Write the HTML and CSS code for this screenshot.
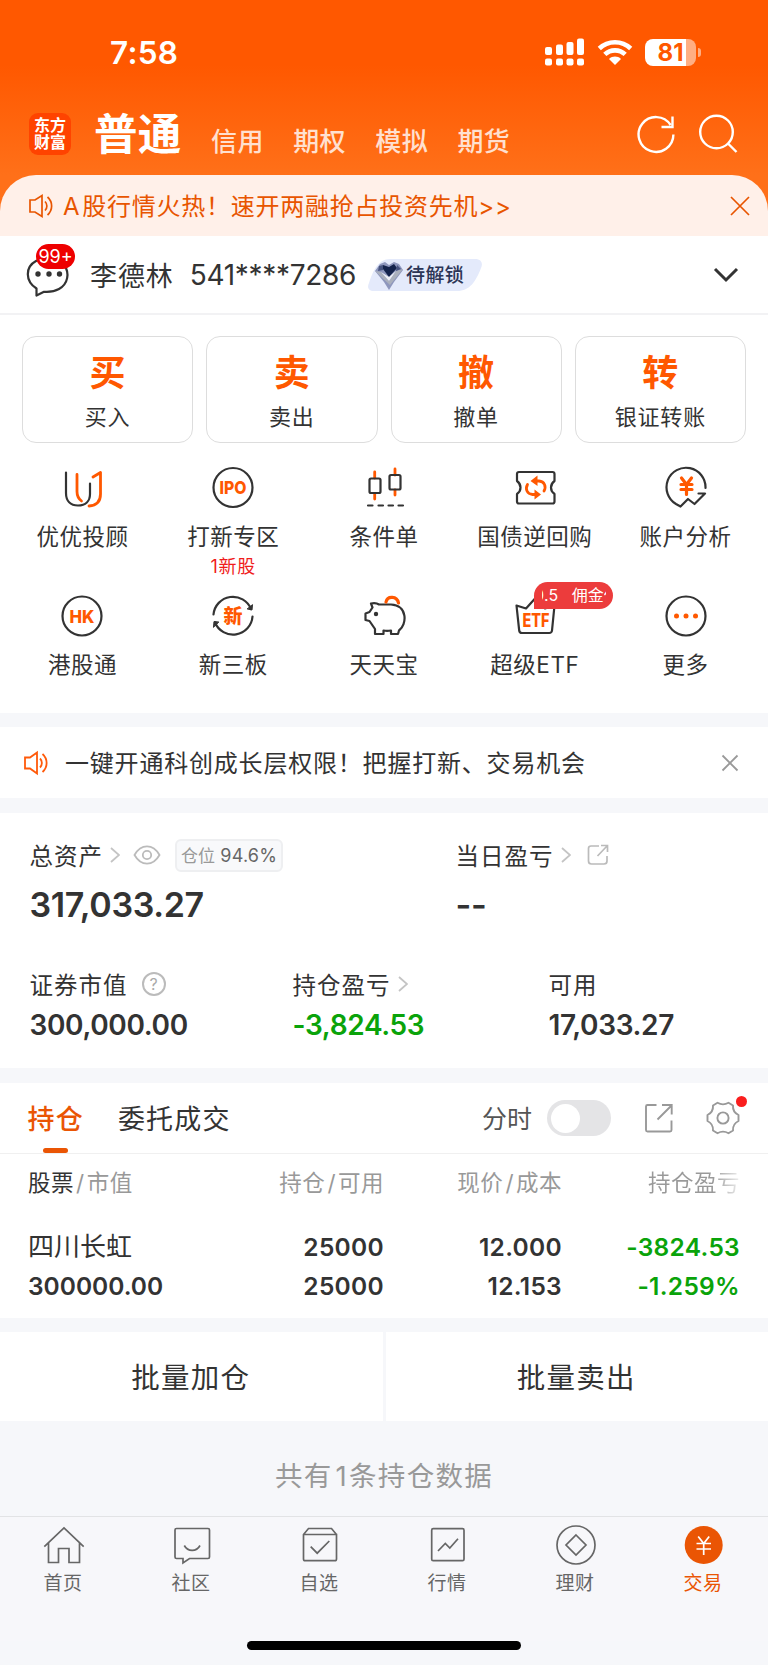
FILE: index.html
```html
<!DOCTYPE html>
<html lang="zh-CN">

<head>
    <meta charset="UTF-8">
    <meta name="viewport" content="width=device-width, initial-scale=1.0">
    <title>东方财富 - 交易</title>
    <link rel="stylesheet" href="styles.css">
</head>

<body>
    <!-- Header -->
    <header class="top">
        <div class="status">
            <span class="status__time">7:58</span>
            <div class="status__icons">
                <svg class="signal" width="40" height="28" viewBox="0 0 40 28" fill="#fff">
                    <rect x="0" y="9" width="7" height="8" rx="2" />
                    <rect x="11" y="6.500" width="7" height="10.500" rx="2" />
                    <rect x="21.500" y="4" width="7" height="13" rx="2" />
                    <rect x="32" y="0.500" width="7" height="16.500" rx="2" />
                    <rect x="0" y="20.500" width="7" height="7" rx="2" />
                    <rect x="11" y="20.500" width="7" height="7" rx="2" />
                    <rect x="21.500" y="20.500" width="7" height="7" rx="2" />
                    <rect x="32" y="20.500" width="7" height="7" rx="2" />
                </svg>
                <svg class="wifi" width="36" height="26" viewBox="0 0 36 26" fill="none" stroke="#fff" stroke-width="4.600">
                    <path d="M2.300 9.500C11 1.200 25 1.200 33.700 9.500" />
                    <path d="M7.800 15.400C13.500 10 22.500 10 28.200 15.400" />
                    <path d="M12 20c3.500-3.200 8.500-3.200 12 0l-6 6z" fill="#fff" stroke="none" />
                </svg>
                <div class="battery"><span>81</span></div>
            </div>
        </div>
        <nav class="accounts">
            <div class="logo"><span>东方</span><span>财富</span></div>
            <a class="accounts__item accounts__item--active">普通</a>
            <a class="accounts__item">信用</a>
            <a class="accounts__item">期权</a>
            <a class="accounts__item">模拟</a>
            <a class="accounts__item">期货</a>
            <div class="accounts__tools">
                <svg width="40" height="40" viewBox="0 0 40 40" fill="none" stroke="#fff" stroke-width="2.400">
                    <path d="M37.400 20.500A17.400 17.400 0 1 1 34.600 11M36.500 2.500V13H25.500" />
                </svg>
                <svg width="40" height="40" viewBox="0 0 40 40" fill="none" stroke="#fff" stroke-width="2.400">
                    <circle cx="18.500" cy="18" r="16.300" />
                    <path d="M30 29.500l8.500 8.500" />
                </svg>
            </div>
        </nav>
    </header>

    <div class="promo">
        <svg width="26" height="26" viewBox="0 0 26 26" fill="none" stroke="#e85500" stroke-width="1.700">
            <path d="M2 7h5l7-4.500v21L7 19H2zM17 8.500c2.500 2.500 2.500 6.500 0 9M19.500 4c5.500 5 5.500 13 0 18" />
        </svg>
        <span class="promo__text"><span>A</span>股行情火热！速开两融抢占投资先机&gt;&gt;</span>
        <svg class="promo__close" width="20" height="20" viewBox="0 0 20 20" stroke="#e85500" stroke-width="1.700">
            <path d="M1 1l18 18M19 1L1 19" />
        </svg>
    </div>

    <!-- User -->
    <div class="user">
        <div class="user__msg">
            <svg width="46" height="44" viewBox="0 0 46 44">
                <path d="M10.500 39.500v-7C-1 25-1 11 10 5c9-5 21-4 28 4 6 8 4 19-5 24-5 2.800-10 3.200-15 2.800z" fill="none" stroke="#333" stroke-width="2.200" stroke-linejoin="round" />
                <g fill="#333">
                    <circle cx="12" cy="18" r="2.700" />
                    <circle cx="23" cy="18" r="2.700" />
                    <circle cx="33.500" cy="18" r="2.700" />
                </g>
            </svg>
            <span class="user__count">99+</span>
        </div>
        <span class="user__name">李德林</span>
        <span class="user__no">541****7286</span>
        <div class="level">
            <svg class="level__bg" width="116" height="32" viewBox="0 0 116 32">
                <path d="M22 0h85c7 0 8 5 6 9-5 13-11 23-24 23H6c-6 0-7-4-5-8C5 12 10 0 22 0z" fill="#e4eafb" />
            </svg>
            <svg class="level__gem" width="30" height="30" viewBox="0 0 30 30">
                <path d="M6 2l5-2 4 3 5-3 5 2 4 6-9 12-5 8-5-8L1 9z" fill="#8e97bd" />
                <path d="M9 3l6 2 5-3 3 4-8 9-6-8z" fill="#14234c" />
                <path d="M1 9l6 1 8 9 7-10 7-2-13 16z" fill="#aab0bd" />
                <path d="M7 10l8 9 7-10-7 6z" fill="#eef0f6" />
                <path d="M5 4l4-1v5L4 9zM23 3l4 4-5 2z" fill="#46537f" />
            </svg>
            <span>待解锁</span>
        </div>
        <svg class="user__more" width="26" height="16" viewBox="0 0 26 16" fill="none" stroke="#333" stroke-width="3">
            <path d="M2 2l11 11L24 2" />
        </svg>
    </div>

    <!-- Trade buttons -->
    <div class="trade">
        <a class="trade__btn"><b>买</b><span>买入</span></a>
        <a class="trade__btn"><b>卖</b><span>卖出</span></a>
        <a class="trade__btn"><b>撤</b><span>撤单</span></a>
        <a class="trade__btn"><b>转</b><span>银证转账</span></a>
    </div>

    <!-- Feature menu -->
    <div class="menu">
        <a class="menu__item">
            <svg class="icon" viewBox="0 0 44 44">
                <path d="M6 6.500V27c0 8 4.500 12.500 12 12.500S30 35 30 28V17.500" />
                <path class="o" d="M17 8.500v17c0 4 1.800 7.500 4.500 9.500M33 11l7.500-4.500V28c0 7-4 11.500-11.500 12" />
            </svg>
            <span>优优投顾</span>
        </a>
        <a class="menu__item">
            <svg class="icon" viewBox="0 0 44 44">
                <circle cx="22" cy="21.500" r="19.500" />
                <text x="22" y="28" font-size="18" textLength="27" lengthAdjust="spacingAndGlyphs">IPO</text>
            </svg>
            <span>打新专区</span>
            <small>1新股</small>
        </a>
        <a class="menu__item">
            <svg class="icon" viewBox="0 0 44 44">
                <path class="o" d="M12.700 6v6M12.700 28v5M33 3v6M33 24v5" />
                <rect x="7.500" y="12.500" width="11" height="14.500" rx="1.500" />
                <rect x="27.500" y="9" width="11" height="14.500" rx="1.500" />
                <path d="M6 39.500h4.500M16.500 39.500h4.500M26.500 39.500h4.500M36.500 39.500h4.500" />
            </svg>
            <span>条件单</span>
        </a>
        <a class="menu__item">
            <svg class="icon" viewBox="0 0 44 44">
                <path d="M6 6h33.500q2 0 2 2v7q-3.500 2.500-3.500 6.500t3.500 6.500v7.500q0 2-2 2H6q-2 0-2-2V28q3.500-2.500 3.500-6.500T4 15V8q0-2 2-2z" />
                <path class="o" d="M14.500 18.500c-2.500 4.500-.5 9.500 5 10h4M31 25c2.500-4.500.5-9.500-5-10h-4" />
                <path class="f" d="M17.500 15l7-5.500v10.500zM28 28.500l-6.500-5v10z" />
            </svg>
            <span>国债逆回购</span>
        </a>
        <a class="menu__item">
            <svg class="icon" viewBox="0 0 44 44">
                <path d="M41.500 22A19.500 19.500 0 1 0 12 38l4.500 2.500L24 33l6.500 5L41 27.500h-6.500" />
                <path class="o y" d="M17.500 12l5 6.500 5-6.500M22.500 18.500v10M17 18.500h11M17 23.500h11" />
            </svg>
            <span>账户分析</span>
        </a>
        <a class="menu__item">
            <svg class="icon" viewBox="0 0 44 44">
                <circle cx="22" cy="22" r="19.500" />
                <text x="22" y="28.500" font-size="18" textLength="25" lengthAdjust="spacingAndGlyphs">HK</text>
            </svg>
            <span>港股通</span>
        </a>
        <a class="menu__item">
            <svg class="icon" viewBox="0 0 44 44">
                <path d="M2.500 20.500A19.500 19.500 0 0 1 40 15M41.500 22.500A19.500 19.500 0 0 1 4 28.500" />
                <path d="M36.500 15l4.500 1 .5-5zM7.500 28L3 27.500 2.500 33z" fill="#333" stroke-width="1" />
                <text x="22" y="28.800" font-size="19">新</text>
            </svg>
            <span>新三板</span>
        </a>
        <a class="menu__item">
            <svg class="icon" viewBox="0 0 44 44">
                <path d="M9 9.500q5-1 8 1h12c17 1 16 20 8 26l-1 3.500h-7v-3.500q-4 .8-7.500 0V40H13v-5l-5.500-8L3.500 26v-6.500L7.500 18l3-4.500z" />
                <path class="o y" d="M24 8c1.500-6.500 11-6 12.500 1" />
                <circle cx="14" cy="20" r="2.200" fill="#333" stroke="none" />
            </svg>
            <span>天天宝</span>
        </a>
        <a class="menu__item">
            <svg class="icon" viewBox="0 0 44 44">
                <path d="M3.500 11.500l9.500 3L22.500 4 32 14.500l9.500-3-2.500 25q-.3 2.500-2.800 2.500H9q-2.500 0-2.800-2.500z" />
                <text x="23" y="32.500" font-size="18.500" textLength="27" lengthAdjust="spacingAndGlyphs">ETF</text>
            </svg>
            <span>超级ETF</span>
            <em class="menu__tag"><i>0</i>.5&nbsp;&nbsp; 佣金<i class="r">仅</i></em>
        </a>
        <a class="menu__item">
            <svg class="icon" viewBox="0 0 44 44">
                <circle cx="22" cy="22" r="19.500" />
                <g class="f">
                    <circle cx="12.500" cy="22" r="2.500" />
                    <circle cx="22" cy="22" r="2.500" />
                    <circle cx="31.500" cy="22" r="2.500" />
                </g>
            </svg>
            <span>更多</span>
        </a>
    </div>

    <!-- Notice -->
    <div class="notice">
        <svg width="26" height="26" viewBox="0 0 26 26" fill="none" stroke="#ff5a0a" stroke-width="1.800">
            <path d="M2 7.500h5l7-5v21l-7-5H2zM17 8.500c2.500 2.500 2.500 6.500 0 9M19.500 4c5.500 5 5.500 13 0 18" />
        </svg>
        <span class="notice__text">一键开通科创成长层权限！把握打新、交易机会</span>
        <svg width="18" height="18" viewBox="0 0 18 18" stroke="#999" stroke-width="1.800">
            <path d="M1.500 1.500l15 15M16.500 1.500l-15 15" />
        </svg>
    </div>

    <!-- Assets -->
    <section class="assets">
        <div class="assets__row assets__row--total">
            <div class="asset">
                <div class="asset__label">
                    总资产
                    <svg class="arrow" viewBox="0 0 10 16"><path d="M1 1l8 7-8 7" /></svg>
                    <svg class="eye" width="28" height="20" viewBox="0 0 28 20" fill="none" stroke="#bbb" stroke-width="1.800">
                        <path d="M1.500 10C8-1.500 20-1.500 26.500 10 20 21.500 8 21.500 1.500 10z" />
                        <circle cx="14" cy="10" r="4.200" />
                    </svg>
                    <span class="position">仓位 <b>94.6%</b></span>
                </div>
                <div class="asset__value">317,033.27</div>
            </div>
            <div class="asset">
                <div class="asset__label">
                    当日盈亏
                    <svg class="arrow" viewBox="0 0 10 16"><path d="M1 1l8 7-8 7" /></svg>
                    <svg class="share" width="22" height="22" viewBox="0 0 22 22" fill="none" stroke="#bbb" stroke-width="1.700">
                        <path d="M12 2H4Q1.500 2 1.500 4.500V17q0 3 3 3H17q3 0 3-3V12M10.500 12L20 2M14 1.500h6.500V8" />
                    </svg>
                </div>
                <div class="asset__value">--</div>
            </div>
        </div>
        <div class="assets__row assets__row--detail">
            <div class="asset">
                <div class="asset__label">
                    证券市值
                    <span class="help">?</span>
                </div>
                <div class="asset__value">300,000.00</div>
            </div>
            <div class="asset">
                <div class="asset__label">
                    持仓盈亏
                    <svg class="arrow" viewBox="0 0 10 16"><path d="M1 1l8 7-8 7" /></svg>
                </div>
                <div class="asset__value down">-3,824.53</div>
            </div>
            <div class="asset">
                <div class="asset__label">可用</div>
                <div class="asset__value">17,033.27</div>
            </div>
        </div>
    </section>

    <!-- Holdings -->
    <section class="holdings">
        <div class="tabs">
            <a class="tabs__item tabs__item--active">持仓</a>
            <a class="tabs__item">委托成交</a>
            <div class="tabs__tools">
                <span>分时</span>
                <div class="switch"></div>
                <svg class="export" width="30" height="30" viewBox="0 0 30 30" fill="none" stroke="#999" stroke-width="1.900">
                    <path d="M12.500 2H3.500Q2 2 2 3.500V27q0 1.500 1.500 1.500H26q1.500 0 1.500-1.500V17.500M13.500 16.500L28 2M18 2h9.700v9.500" />
                </svg>
                <div class="gear">
                    <svg width="34" height="34" viewBox="0 0 34 34" fill="none" stroke="#999" stroke-width="1.900" stroke-linejoin="round">
                        <path d="M11.500 1.800Q17 5 22.500 1.800L27 4.500Q26.500 11 32.500 14v6Q26.500 23 27 29.500l-4.500 2.700Q17 29 11.500 32.200L7 29.500Q7.500 23 1.500 20v-6Q7.500 11 7 4.500z" />
                        <circle cx="17" cy="17" r="5.600" />
                    </svg>
                </div>
            </div>
        </div>
        <table>
            <thead>
                <tr>
                    <th><b>股票</b><i>/</i>市值</th>
                    <th>持仓<i>/</i>可用</th>
                    <th>现价<i>/</i>成本</th>
                    <th><span class="fade">持仓盈亏</span></th>
                </tr>
            </thead>
            <tbody>
                <tr>
                    <td class="stock">四川长虹</td>
                    <td>25000</td>
                    <td>12.000</td>
                    <td class="down">-3824.53</td>
                </tr>
                <tr>
                    <td>300000.00</td>
                    <td>25000</td>
                    <td>12.153</td>
                    <td class="down">-1.259%</td>
                </tr>
            </tbody>
        </table>
    </section>

    <div class="batch">
        <a>批量加仓</a>
        <a>批量卖出</a>
    </div>

    <p class="summary">共有<span>1</span>条持仓数据</p>

    <!-- Bottom bar -->
    <footer class="bar">
        <a class="bar__item">
            <svg class="bar__icon" viewBox="0 0 44 44">
                <path d="M2.300 23.700L22 5l19.700 18.700M6.500 20v19.500h10v-14h10.500v14h10.500V20" />
            </svg>
            <span>首页</span>
        </a>
        <a class="bar__item">
            <svg class="bar__icon" viewBox="0 0 44 44">
                <path d="M6.500 5.500h31.500q1.500 0 1.500 1.500v27q0 1.500-1.500 1.500H19.500L13 40v-4.500H6.500Q5 35.500 5 34V7q0-1.500 1.500-1.500zM14.300 22.500c3.500 6.500 12.200 6.500 15.700 0" />
            </svg>
            <span>社区</span>
        </a>
        <a class="bar__item">
            <svg class="bar__icon" viewBox="0 0 44 44">
                <path d="M5.500 11.500h33V36q0 1.700-1.700 1.700H7.200Q5.500 37.700 5.500 36V11.500l5-6h23l5 6M12.700 23.700l6.500 6.500L31.300 18" />
            </svg>
            <span>自选</span>
        </a>
        <a class="bar__item">
            <svg class="bar__icon" viewBox="0 0 44 44">
                <rect x="5.700" y="5.700" width="32.300" height="32" rx="1.500" />
                <path d="M12 28l7.300-7.500 4.500 4.500L32 15.700" />
            </svg>
            <span>行情</span>
        </a>
        <a class="bar__item">
            <svg class="bar__icon" viewBox="0 0 44 44">
                <circle cx="22" cy="22" r="19" />
                <path d="M22 12l10 10-10 10-10-10z" />
            </svg>
            <span>理财</span>
        </a>
        <a class="bar__item bar__item--active">
            <svg class="bar__icon" viewBox="0 0 44 44">
                <circle cx="21.700" cy="22" r="19" fill="#ea5504" stroke="none" />
                <path d="M16.200 13.500l5.500 7 5.500-7M21.700 20.500V32M14.500 20.500h14.500M14.500 26h14.500" stroke="#fff" />
            </svg>
            <span>交易</span>
        </a>
    </footer>
    <div class="home-indicator"></div>
</body>

</html>
```
FILE: styles.css
```css
* {
    box-sizing: border-box;
}

body {
    margin: 0;
    width: 768px;
    height: 1665px;
    overflow: hidden;
    background: #f6f7fa;
    color: #333;
    font-family: Inter, "Noto Sans CJK SC", sans-serif;
    font-size: 23px;
}

svg {
    display: block;
    flex: none;
}

/* Header */
.top {
    height: 236px;
    margin-bottom: -61px;
    background: linear-gradient(#ff5800 0, #ff5800 65px, #ff7019 175px);
    color: #fff;
}

.status {
    height: 104px;
    display: flex;
    justify-content: space-between;
    padding: 0 68px 0 110px;
    align-items: center;
}

.status__time {
    font-size: 31.5px;
    font-weight: 600;
    letter-spacing: 0.3px;
    padding-top: 1px;
}

.status__icons {
    display: flex;
    align-items: center;
}

.wifi {
    margin: 0 12px 0 12px;
}

.battery {
    position: relative;
    width: 51px;
    height: 27px;
    border-radius: 8px;
    background: linear-gradient(90deg, #fff 41px, #ffae83 41px);
    color: #ff5800;
    font-size: 24px;
    font-weight: 700;
    line-height: 27px;
    text-align: center;
    margin-right: 4px;
}

.battery::after {
    content: "";
    position: absolute;
    left: 53px;
    top: 9px;
    width: 3px;
    height: 9px;
    border-radius: 0 4px 4px 0;
    background: #ffae83;
}

.accounts {
    display: flex;
    height: 60px;
    padding: 0 30px 0 29px;
    align-items: center;
}

.logo {
    display: flex;
    flex-direction: column;
    width: 42px;
    height: 42px;
    border-radius: 9px;
    background: #ff4300;
    font-size: 16px;
    font-weight: 700;
    line-height: 17px;
    text-align: center;
    padding-top: 4px;
    margin-right: 23px;
}

.accounts__item {
    font-size: 26px;
    font-weight: 500;
    line-height: 40px;
    letter-spacing: 0.3px;
    margin-right: 29.5px;
    padding-top: 15px;
    color: #ffe0d0;
}

.accounts__item--active {
    font-size: 43.5px;
    font-weight: 700;
    line-height: 60px;
    color: #fff;
    padding: 0;
}

.accounts__tools {
    display: flex;
    gap: 22.5px;
    margin-left: auto;
}

.promo {
    position: relative;
    height: 61px;
    padding: 0 18px 0 28px;
    display: flex;
    align-items: center;
    border-radius: 36px 36px 0 0;
    background: #fff0e9;
    color: #e85500;
}

.promo__text {
    margin-left: 9px;
    padding-bottom: 2px;
    font-size: 24px;
    letter-spacing: 0.75px;
}

.promo__text span {
    margin-right: 2px;
}

.promo__close {
    margin-left: auto;
}

/* User */
.user {
    height: 79px;
    display: flex;
    align-items: center;
    background: #fff;
    border-bottom: 2px solid #f2f2f4;
    padding: 1px 29px 0 26px;
}

.user__msg {
    position: relative;
    width: 46px;
    margin-top: 6px;
}

.user__count {
    position: absolute;
    left: 10px;
    top: -12px;
    width: 39px;
    height: 25px;
    border-radius: 13px;
    background: #ee0000;
    color: #fff;
    font-size: 18px;
    line-height: 26px;
    text-align: center;
}

.user__name {
    margin-left: 18px;
    padding-bottom: 1px;
    font-size: 27px;
    letter-spacing: 0.9px;
}

.user__no {
    margin-left: 16px;
    font-size: 28px;
    letter-spacing: -0.3px;
}

.level {
    position: relative;
    width: 116px;
    height: 32px;
    margin: 0 0 0 12px;
    padding-left: 38px;
    font-size: 19px;
    font-weight: 500;
    line-height: 33px;
    letter-spacing: 0.3px;
    color: #2c3556;
}

.level span {
    position: relative;
}

.level__bg {
    position: absolute;
    left: 0;
    top: 0;
}

.level__gem {
    position: absolute;
    left: 6px;
    top: 3px;
}

.user__more {
    margin-left: auto;
}

/* Trade buttons */
.trade {
    display: grid;
    grid-template-columns: repeat(4, 1fr);
    gap: 13px;
    padding: 21px 22px 0;
    height: 151px;
    background: #fff;
}

.trade__btn {
    height: 107px;
    border: 1.5px solid #ddd;
    border-radius: 14px;
    display: flex;
    flex-direction: column;
    align-items: center;
}

.trade__btn b {
    font-size: 36px;
    line-height: 44px;
    margin-top: 14px;
    color: #ff5800;
}

.trade__btn span {
    font-size: 22px;
    line-height: 30px;
    margin-top: 7px;
    letter-spacing: 0.8px;
}

/* Feature menu */
.menu {
    display: grid;
    grid-template-columns: repeat(5, 1fr);
    grid-template-rows: 128px 119px;
    padding: 0 7px;
    height: 247px;
    background: #fff;
}

.menu__item {
    position: relative;
    display: flex;
    flex-direction: column;
    align-items: center;
}

.icon {
    width: 44px;
    height: 44px;
    fill: none;
    stroke: #333;
    stroke-width: 2.2;
    stroke-linejoin: round;
    stroke-linecap: round;
}

.icon .o {
    stroke: #ff5800;
    stroke-width: 2.8;
}

.icon .y {
    stroke-width: 3.2;
}

.icon .f {
    fill: #ff5800;
    stroke: none;
}

.icon text {
    fill: #ff5800;
    stroke: none;
    font-weight: 800;
    text-anchor: middle;
}

.menu__item span {
    font-size: 22.5px;
    line-height: 30px;
    margin-top: 12px;
    letter-spacing: 0.5px;
}

.menu__item small {
    color: #f01c1c;
    font-size: 18px;
    line-height: 24px;
    margin-top: 3px;
    letter-spacing: 0.7px;
}

.menu__tag {
    position: absolute;
    left: 75px;
    top: -12px;
    width: 79px;
    height: 27px;
    border-radius: 14px 14px 14px 0;
    background: #ec3c3c;
    color: #fff;
    font-size: 16px;
    font-style: normal;
    line-height: 27px;
    display: flex;
    justify-content: center;
    white-space: nowrap;
}

/* the tag is a marquee, both ends are clipped */
.menu__tag i {
    width: 2px;
    overflow: hidden;
    direction: rtl;
    font-style: normal;
}

.menu__tag .r {
    direction: ltr;
}

/* Notice */
.notice {
    margin: 14px 0 15px;
    height: 71px;
    display: flex;
    align-items: center;
    padding: 0 29px 0 23px;
    background: #fff;
}

.notice__text {
    flex: 1;
    margin-left: 16px;
    padding-bottom: 3px;
    font-size: 24px;
    letter-spacing: 0.8px;
}

/* Assets */
.assets {
    height: 255px;
    padding-top: 24px;
    background: #fff;
}

.assets__row {
    display: grid;
    padding-left: 29.5px;
    height: 129px;
}

.assets__row--total {
    grid-template-columns: 426px 1fr;
}

.assets__row--detail {
    grid-template-columns: 263px 256px 1fr;
}

.asset__label {
    display: flex;
    align-items: center;
    height: 36px;
    font-size: 23.5px;
    letter-spacing: 1px;
}

.arrow {
    width: 10px;
    height: 16px;
    margin-left: 7px;
    fill: none;
    stroke: #c4c4c4;
    stroke-width: 1.8;
}

.eye {
    margin-left: 13px;
}

.position {
    margin-left: 14px;
    height: 33px;
    width: 108px;
    border: 2px solid #eeeff1;
    border-radius: 6px;
    background: #f8f9fb;
    color: #999;
    font-size: 17px;
    line-height: 30px;
    letter-spacing: 0.2px;
    text-align: center;
    white-space: nowrap;
}

.position b {
    font-weight: 400;
    font-size: 18px;
    color: #666;
}

.share {
    margin-left: 16px;
}

.help {
    width: 24px;
    height: 24px;
    margin-left: 14px;
    border: 2px solid #bbb;
    border-radius: 50%;
    color: #aaa;
    font-size: 16px;
    line-height: 20px;
    letter-spacing: 0;
    text-align: center;
}

.asset__value {
    font-size: 28px;
    font-weight: 600;
    line-height: 40px;
    letter-spacing: -0.35px;
    margin-top: 3px;
}

.assets__row--total .asset__value {
    font-size: 34px;
    line-height: 44px;
    margin-top: 10px;
}

.down {
    color: #0aa30a;
}

/* Holdings */
.holdings {
    height: 235px;
    margin: 15px 0 14px;
    background: #fff;
}

.tabs {
    height: 71px;
    display: flex;
    align-items: center;
    padding: 0 28px 0 27.5px;
    border-bottom: 1px solid #f0f0f0;
}

.tabs__item {
    position: relative;
    height: 70px;
    font-size: 27px;
    line-height: 73px;
    letter-spacing: 1.2px;
    margin-right: 34px;
}

.tabs__item--active {
    color: #ea5504;
    font-weight: 500;
}

.tabs__item--active::after {
    content: "";
    position: absolute;
    left: 15.5px;
    bottom: 0;
    width: 25px;
    height: 5px;
    border-radius: 3px;
    background: #ea5504;
}

.tabs__tools {
    display: flex;
    align-items: center;
    margin-left: auto;
    font-size: 25px;
    color: #555;
}

.tabs__tools span {
    padding-bottom: 2px;
}

.switch {
    width: 64px;
    height: 36px;
    border-radius: 18px;
    background: #e4e4e6;
    margin: 0 33px 0 15px;
    padding: 3.5px;
}

.switch::before {
    content: "";
    display: block;
    width: 29px;
    height: 29px;
    border-radius: 50%;
    background: #fff;
}

.export {
    margin-right: 32px;
}

.gear {
    position: relative;
}

.gear::after {
    content: "";
    position: absolute;
    right: -7px;
    top: -5px;
    width: 11px;
    height: 11px;
    border-radius: 50%;
    background: #fa1e1e;
}

table {
    width: 712px;
    margin-left: 28px;
    table-layout: fixed;
    border-collapse: collapse;
}

th {
    width: 178px;
    height: 60px;
    padding: 0 0 6px;
    font-size: 22.5px;
    font-weight: 400;
    letter-spacing: 0.5px;
    text-align: right;
    color: #999;
}

th b {
    font-weight: 400;
    color: #333;
}

th i {
    font-style: normal;
    margin: 0 2px;
}

td {
    height: 39px;
    padding: 0;
    font-size: 24.5px;
    font-weight: 600;
    line-height: 38px;
    letter-spacing: 0.3px;
    text-align: right;
}

tbody tr:first-child td {
    padding-top: 13px;
    height: 52px;
}

th:first-child,
td:first-child {
    text-align: left;
    letter-spacing: 0;
}

th:first-child {
    letter-spacing: 0.5px;
}

.stock {
    font-size: 26px;
    font-weight: 400;
}

.fade {
    background: linear-gradient(90deg, #999 70%, #eee);
    background-clip: text;
    -webkit-background-clip: text;
    color: transparent;
}

.batch {
    display: flex;
    gap: 3px;
    height: 89px;
}

.batch a {
    flex: 1;
    background: #fff;
    font-size: 28.5px;
    line-height: 91px;
    letter-spacing: 1.2px;
    text-align: center;
    padding-right: 1px;
}

.summary {
    margin: 0;
    height: 95px;
    font-size: 27.5px;
    line-height: 111px;
    letter-spacing: 1.3px;
    text-align: center;
    color: #999;
}

.summary span {
    margin: 0 1px 0 3px;
}

/* Bottom bar */
.bar {
    display: grid;
    grid-template-columns: repeat(6, 1fr);
    height: 125px;
    padding-top: 6px;
    border-top: 1px solid #e2e3e5;
    background: #f7f7fa;
}

.bar__item {
    display: flex;
    flex-direction: column;
    align-items: center;
    font-size: 19px;
    line-height: 33px;
    color: #666;
}

.bar__item span {
    padding-right: 2px;
    letter-spacing: 0.4px;
}

.bar__item--active {
    color: #ea5504;
}

.bar__icon {
    width: 44px;
    height: 44px;
    fill: none;
    stroke: #666;
    stroke-width: 1.7;
}

.home-indicator {
    width: 274px;
    height: 9px;
    margin: 0 auto;
    border-radius: 5px;
    background: #000;
}
```
